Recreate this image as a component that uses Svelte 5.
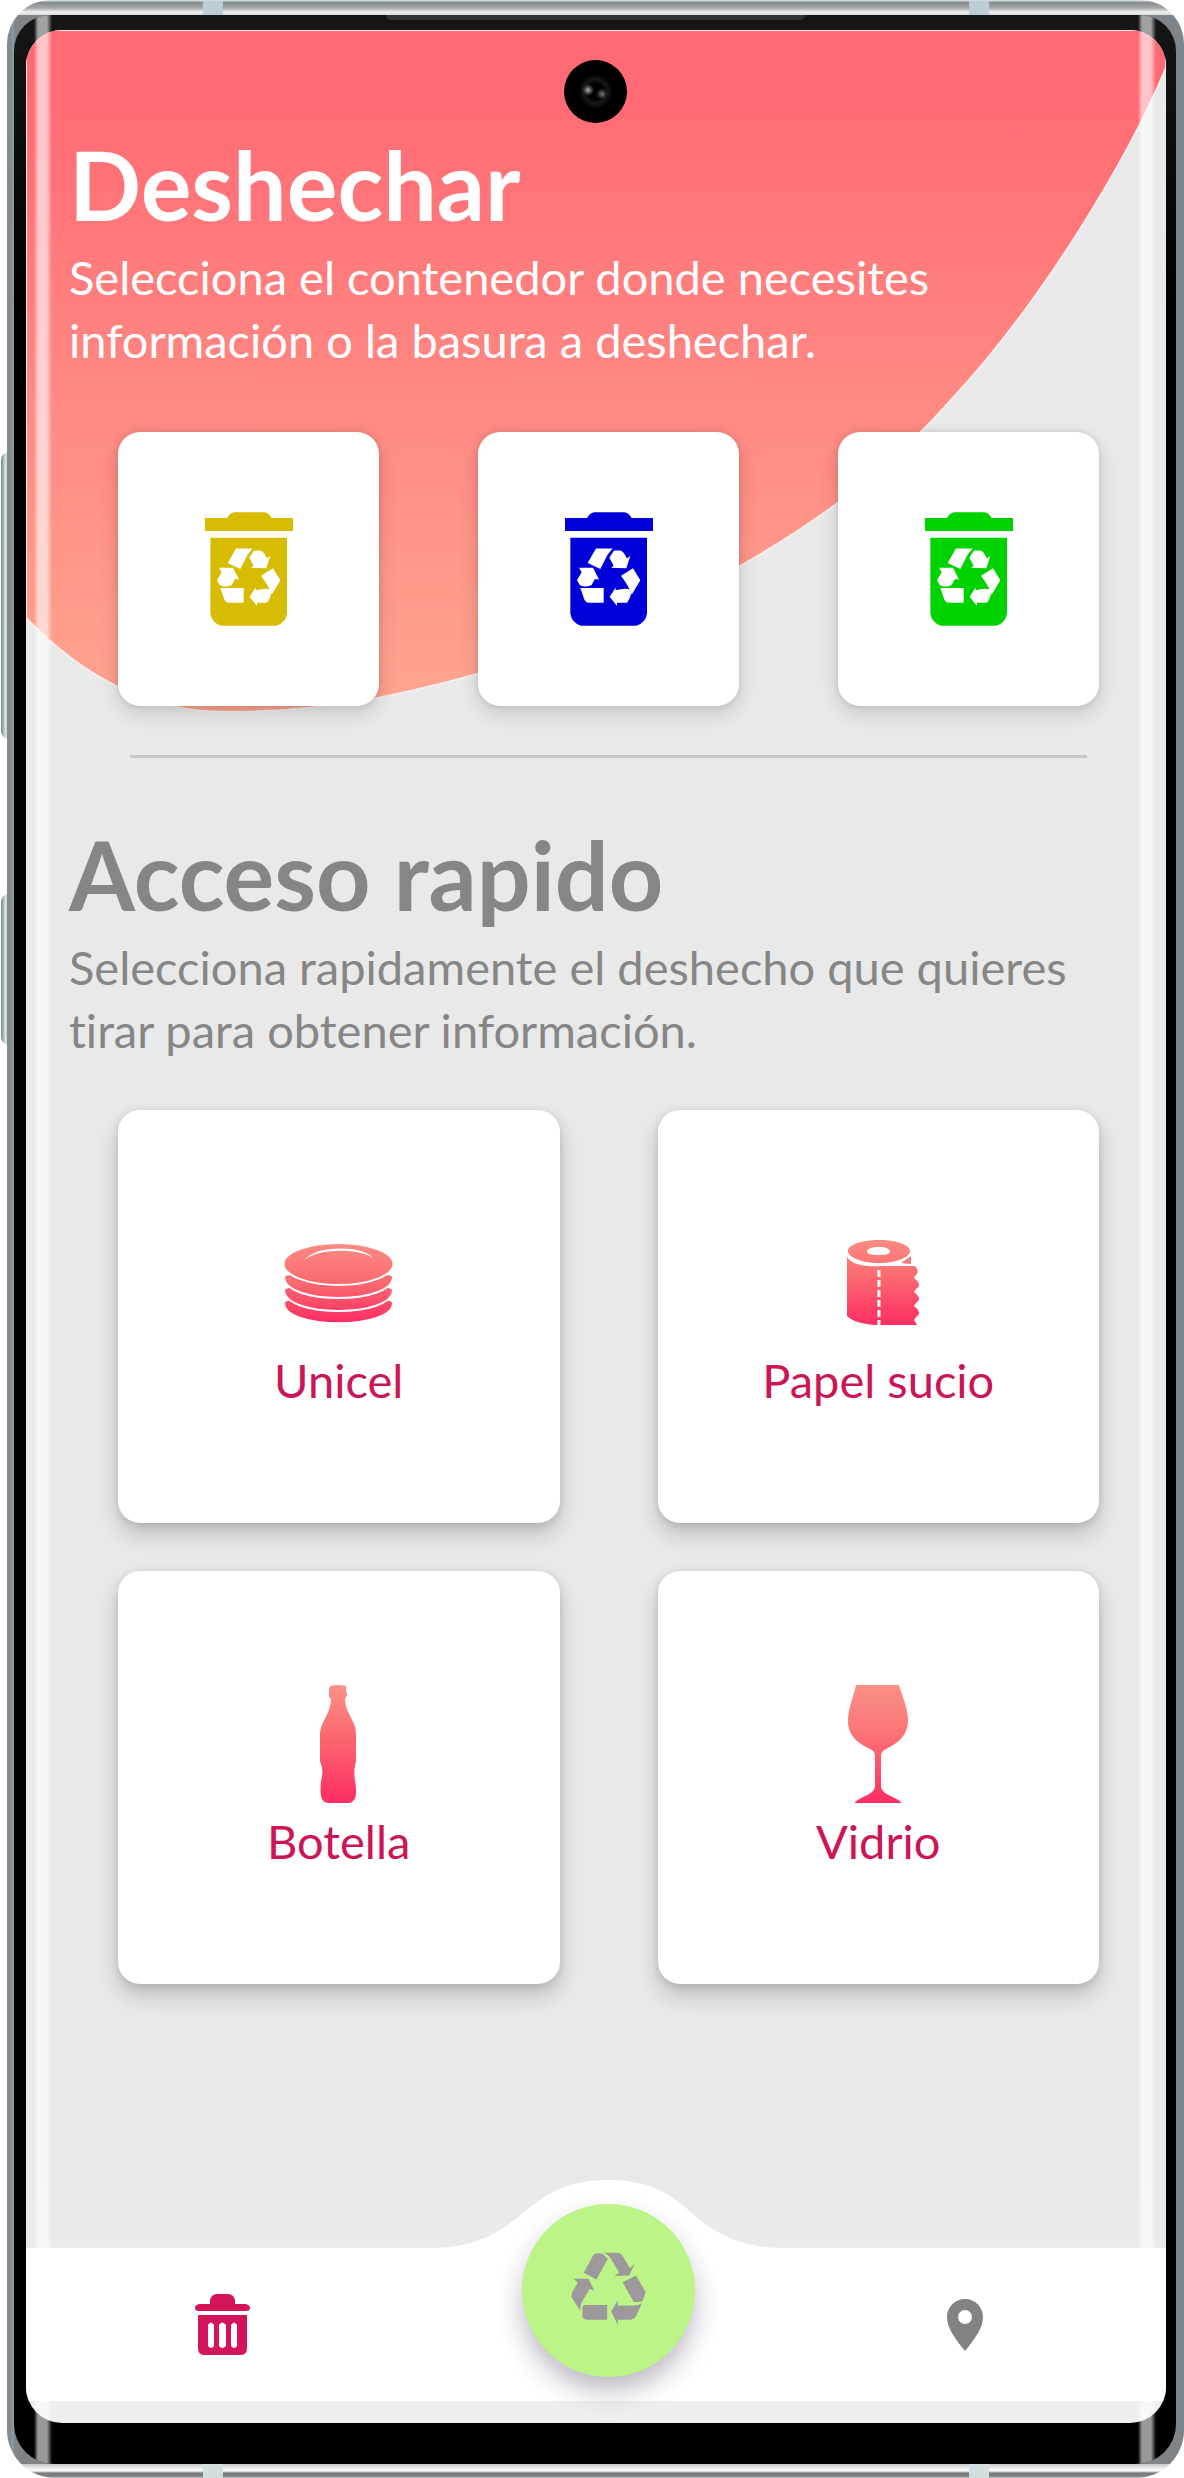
<script>
  const bins = [
    { name: 'Contenedor amarillo', color: 'yellow' },
    { name: 'Contenedor azul', color: 'blue' },
    { name: 'Contenedor verde', color: 'green' }
  ];
  const items = [
    { name: 'Unicel', icon: 'plates' },
    { name: 'Papel sucio', icon: 'paper' },
    { name: 'Botella', icon: 'bottle' },
    { name: 'Vidrio', icon: 'glass' }
  ];
</script>

<div class="device">
  <span class="side volume"></span>
  <span class="side power"></span>
  <div class="frame">
    <span class="band top left"></span>
    <span class="band top right"></span>
    <span class="band bottom left"></span>
    <span class="band bottom right"></span>
    <div class="bezel">
      <span class="earpiece"></span>
      <div class="screen">
        <svg class="wave" viewBox="0 0 1140 683" preserveAspectRatio="none" aria-hidden="true">
          <defs>
            <linearGradient id="coral" x1="0" y1="0" x2="0" y2="1">
              <stop offset="0" stop-color="#ff6a74" />
              <stop offset="0.12" stop-color="#ff6c75" />
              <stop offset="0.55" stop-color="#ff8983" />
              <stop offset="1" stop-color="#ffa590" />
            </linearGradient>
          </defs>
          <path
            d="M0 0H1140V38C1102 130 1016 272 925 370C880 422 810 482 714 536C600 600 480 642 352 668C300 678 250 682 199 682C120 682 55 645 0 588Z"
            fill="url(#coral)"
            stroke="#f4eeee"
            stroke-width="2"
          />
        </svg>

        <main>
          <section class="intro">
            <h1>Deshechar</h1>
            <p>Selecciona el contenedor donde necesites información o la basura a deshechar.</p>
          </section>

          <div class="bins">
            {#each bins as bin}
              <button class="card bin {bin.color}" aria-label={bin.name}>
                <svg viewBox="20 20 264 344" preserveAspectRatio="none" aria-hidden="true">
                  <path fill="currentColor" d="M20 38H86Q96 22 108 21H198Q210 22 220 38H284V77H20Z" />
                  <path fill="currentColor" d="M36 98H266V326Q262 354 234 363H68Q40 354 36 326Z" />
                  <g fill="#fff">
                    <path d="M113 130H163L148 148L126 192L88 174Z" />
                    <path d="M167 136H186Q194 138 198 146L206 160L216 152L204 190L158 188L166 182L153 158Z" />
                    <path d="M188 212L224 190L246 226L220 270Q216 250 188 212Z" />
                    <path d="M154 276L172 248V256Q200 248 216 254Q222 272 206 294H176V304Z" />
                    <path d="M66 249H136V294H90Q81 292 78 284Z" />
                    <path d="M62 188H104L122 224L110 222L100 240Q80 250 64 240L56 226L70 202Z" />
                  </g>
                </svg>
              </button>
            {/each}
          </div>

          <hr />

          <section class="intro quick">
            <h2>Acceso rapido</h2>
            <p>Selecciona rapidamente el deshecho que quieres tirar para obtener información.</p>
          </section>

          <div class="items">
            {#each items as item}
              <button class="card item">
                <span class="art">
                  {#if item.icon === 'plates'}
                    <svg width="109" height="80" viewBox="0 0 109 80" aria-hidden="true">
                      <defs>
                        <linearGradient id="plates" gradientUnits="userSpaceOnUse" x1="0" y1="0" x2="0" y2="80">
                          <stop offset="0" stop-color="#fb8b83" />
                          <stop offset="0.5" stop-color="#fb6a70" />
                          <stop offset="1" stop-color="#fd2c62" />
                        </linearGradient>
                      </defs>
                      <g fill="url(#plates)" stroke="#fff" stroke-width="2">
                        <path d="M0 60C0 50 109 50 109 60C109 87 0 87 0 60Z" />
                        <path d="M0 47C0 38 109 38 109 47C109 75 0 75 0 47Z" />
                        <path d="M0 34C0 26 109 26 109 34C109 62 0 62 0 34Z" />
                        <ellipse cx="54.500" cy="21" rx="55" ry="21" />
                      </g>
                      <path d="M21 17C30 2 80 2 89 15C74 5 34 5 21 17Z" fill="#fff" />
                    </svg>
                  {:else if item.icon === 'paper'}
                    <svg width="81" height="86" viewBox="-9 0 81 86" aria-hidden="true">
                      <defs>
                        <linearGradient id="paper" gradientUnits="userSpaceOnUse" x1="0" y1="0" x2="0" y2="86">
                          <stop offset="0" stop-color="#fb8b83" />
                          <stop offset="0.4" stop-color="#fb6c70" />
                          <stop offset="1" stop-color="#fd2c62" />
                        </linearGradient>
                      </defs>
                      <g fill="url(#paper)">
                        <path d="M0 17C6 26 22 27 34 26H68Q73 31 69 35L67 38Q76 45 69 49L67 52Q76 59 69 63L67 66Q76 73 69 77L67 80L70 85H30Q8 84 0 76Z" />
                        <path d="M64 16V24L54 23Z" />
                        <path fill-rule="evenodd" d="M32 0C50 0 63 5 63 11S50 23 32 23S1 17 1 11S14 0 32 0ZM32 7C25 7 20 9 20 11.500S25 15 32 15S43 14 43 11.500S39 7 32 7Z" />
                      </g>
                      <path d="M32 30V86" stroke="#fff" stroke-width="3" stroke-dasharray="7 3" />
                    </svg>
                  {:else if item.icon === 'bottle'}
                    <svg width="37" height="118" viewBox="0 0 37 118" aria-hidden="true">
                      <defs>
                        <linearGradient id="bottle" x1="0" y1="0" x2="0" y2="1">
                          <stop offset="0" stop-color="#fb9187" />
                          <stop offset="0.4" stop-color="#fb6c70" />
                          <stop offset="1" stop-color="#fd2c62" />
                        </linearGradient>
                      </defs>
                      <path fill="url(#bottle)" d="M10 1Q18 -1 26 1V6Q28 8 26 12L25 14C25 28 36 36 36 48V76C34 84 34 89 35 96C37 108 37 117 28 118H8C0 117 0 108 1 96C3 89 3 84 0 76V48C1 36 11 28 11 14L9 12V5Z" />
                    </svg>
                  {:else}
                    <svg width="60" height="118" viewBox="0 0 60 118" aria-hidden="true">
                      <defs>
                        <linearGradient id="glass" x1="0" y1="0" x2="0" y2="1">
                          <stop offset="0" stop-color="#fb9187" />
                          <stop offset="0.4" stop-color="#fb7476" />
                          <stop offset="1" stop-color="#fd2c62" />
                        </linearGradient>
                      </defs>
                      <path fill="url(#glass)" d="M8 0H51C55 13 60 24 60 35C60 52 48 59 38 64Q33 66 33 71V102C35 110 46 111 53 117V118H7V117C14 111 25 110 27 102V71Q27 66 22 64C12 59 0 52 0 36C0 24 5 13 8 0Z" />
                    </svg>
                  {/if}
                </span>
                {item.name}
              </button>
            {/each}
          </div>
        </main>

        <nav aria-label="Principal">
          <svg class="hump" viewBox="0 0 380 69" aria-hidden="true">
            <path fill="#fff" d="M14 69C60 68 78 54 100 38C122 20 142 1 190 1C238 1 258 20 280 40C302 56 320 68 366 69Z" />
          </svg>
          <a class="tab trash" href="#deshechar" aria-label="Deshechar">
            <svg width="55" height="62" viewBox="0 0 55 62" aria-hidden="true">
              <path fill="currentColor" d="M4 10H15V6Q16 1 21 0H34Q39 1 40 6V10H51Q55 11 55 14T51 17H4Q0 17 0 14T4 10Z" />
              <path fill="currentColor" fill-rule="evenodd" d="M3 21H52V54Q52 61 46 61H9Q3 61 3 54ZM13 31V52Q16 56 19 52V31Q16 26 13 31ZM24 31V52Q27 56 31 52V31Q27 26 24 31ZM36 31V52Q39 56 42 52V31Q39 26 36 31Z" />
            </svg>
          </a>
          <button class="fab" aria-label="Reciclar">
            <svg width="75" height="73" viewBox="38 40 224 218" aria-hidden="true">
              <g fill="currentColor">
                <path d="M106 47Q118 42 132 45L148 60L114 122L76 102Z" />
                <path d="M134 42H180Q188 44 192 52L214 88L228 76L212 110L168 112L182 102L158 62Q150 46 134 42Z" />
                <path d="M192 130L232 110L260 158Q260 170 250 188L226 190Z" />
                <path d="M158 218L178 184V200H226Q240 200 250 192L232 232Q226 242 214 242H178V258Z" />
                <path d="M78 198H146V242H86Q76 242 72 234V206Q74 199 78 198Z" />
                <path d="M46 120H90L108 156L94 150L70 190Q64 204 66 216L40 176Q38 164 44 156L58 132Z" />
              </g>
            </svg>
          </button>
          <a class="tab pin" href="#mapa" aria-label="Mapa">
            <svg width="36" height="52" viewBox="0 0 36 52" aria-hidden="true">
              <path fill="currentColor" fill-rule="evenodd" d="M18 0C28 0 36 8 36 18C36 30 26 42 18 52C10 42 0 30 0 18C0 8 8 0 18 0ZM18 11A7 7 0 1 0 18 25A7 7 0 1 0 18 11Z" />
            </svg>
          </a>
        </nav>
      </div>
      <span class="camera"></span>
      <span class="glare start"></span>
      <span class="glare end"></span>
    </div>
  </div>
</div>

<style>
  :global(body) {
    background: #fff;
    font-family: Lato, 'Noto Sans', sans-serif;
    font-variant-ligatures: none;
  }

  * {
    box-sizing: border-box;
  }

  .device {
    position: relative;
    display: flex;
    min-height: 100vh;
    padding-left: 7px;
  }

  .side {
    position: absolute;
    left: 1px;
    width: 16px;
    border-radius: 8px 0 0 8px;
    background: linear-gradient(90deg, #76868a, #dfe7e8 30%, #8b999c 50%, #a9b5b8);
  }

  .volume {
    top: 452px;
    height: 287px;
  }

  .power {
    top: 894px;
    height: 151px;
  }

  .frame {
    position: relative;
    flex: 1;
    display: flex;
    padding: 15px 8px 14px 7px;
    border-radius: 44px 44px 48px 48px;
    background:
      linear-gradient(180deg, #cddcdc 0 1px, #84898c 2px, #a4a8aa 8px, #f0f0f0 12px, #d8dcdc 15px) top / 100% 15px no-repeat,
      linear-gradient(180deg, #c8c8c8, #f2f2f2 5px, #fafafa 7px, #787d80 9px, #787d80 12px, #c0c4c4 14px) bottom / 100% 14px no-repeat,
      linear-gradient(90deg, #7f8b8e 0 3px, #929ca0 7px, transparent 7px) left / 100% 100% no-repeat,
      #7e8488;
  }

  .band {
    position: absolute;
    width: 20px;
    height: 15px;
    background: #bccdd4;
  }

  .band.top {
    top: 1px;
  }

  .band.bottom {
    bottom: 0;
    height: 14px;
    background: #d2dddf;
  }

  .band.left {
    left: 196px;
  }

  .band.right {
    right: 195px;
  }

  .bezel {
    position: relative;
    flex: 1;
    display: flex;
    padding: 15px 10px 41px 12px;
    border-radius: 36px 36px 40px 40px;
    overflow: hidden;
    background: linear-gradient(180deg, #161616, #000 300px);
  }

  .earpiece {
    position: absolute;
    top: 0;
    left: 372px;
    right: 371px;
    height: 5px;
    border-radius: 0 0 12px 12px;
    background: #303434;
  }

  .camera {
    position: absolute;
    top: 45px;
    left: 50%;
    width: 63px;
    height: 63px;
    margin-left: -31px;
    border-radius: 50%;
    background:
      radial-gradient(circle at 24px 30px, #b0b0b0 0, #333 4px, transparent 6px),
      radial-gradient(circle at 38px 34px, #777 0, #222 4px, transparent 6px),
      radial-gradient(circle, #000 8px, #191919 12px, #000 17px);
  }

  .glare {
    position: absolute;
    top: 0;
    bottom: 0;
    width: 18px;
    background: linear-gradient(90deg, transparent, rgba(255, 255, 255, 0.6) 4px, rgba(255, 255, 255, 0.6) 13px, transparent);
  }

  .glare.start {
    left: 20px;
  }

  .glare.end {
    right: 20px;
  }

  .screen {
    position: relative;
    flex: 1;
    display: flex;
    flex-direction: column;
    justify-content: space-between;
    padding-bottom: 22px;
    border-radius: 36px;
    overflow: hidden;
    background: linear-gradient(180deg, #e9e9e9 0 90%, #efefef 99%);
  }

  .wave {
    position: absolute;
    top: 0;
    left: 0;
    width: 100%;
    height: 683px;
  }

  main {
    position: relative;
    display: flex;
    flex-direction: column;
    padding: 104px 67px 0 92px;
  }

  .intro {
    margin-left: -49px;
    color: #fff;
  }

  .quick {
    color: #868686;
  }

  h1,
  h2 {
    margin: 0;
    font-size: 95px;
    line-height: 100px;
    font-weight: 700;
  }

  p {
    margin: 12px 0 0;
    font-size: 47px;
    line-height: 63px;
  }

  .card {
    display: flex;
    align-items: center;
    justify-content: center;
    padding: 0;
    border: 0;
    border-radius: 22px;
    background: #fff;
    box-shadow:
      0 8px 20px rgba(0, 0, 0, 0.14),
      0 0 6px rgba(0, 0, 0, 0.12);
    font: inherit;
    cursor: pointer;
  }

  .bins {
    display: grid;
    grid-template-columns: repeat(3, 1fr);
    gap: 99px;
    margin-top: 60px;
  }

  .bin {
    height: 274px;
  }

  .bin svg {
    width: 88px;
    height: 114px;
  }

  .yellow {
    color: #d8bc02;
  }

  .blue {
    color: #0000d8;
  }

  .green {
    color: #00d200;
  }

  hr {
    width: calc(100% - 24px);
    height: 3px;
    margin: 49px auto 0;
    border: 0;
    background: #c6c8c8;
  }

  .quick {
    margin-top: 66px;
  }

  .items {
    display: grid;
    grid-template-columns: repeat(2, 1fr);
    gap: 48px 98px;
    margin-top: 48px;
  }

  .item {
    flex-direction: column;
    height: 413px;
    color: #cb1556;
    font-size: 47px;
    line-height: 60px;
    box-shadow:
      0 12px 22px rgba(0, 0, 0, 0.18),
      0 2px 8px rgba(0, 0, 0, 0.12);
  }

  .art {
    display: flex;
    align-items: center;
    height: 118px;
    margin-bottom: 8px;
  }

  nav {
    position: relative;
    display: grid;
    grid-template-columns: 392fr 380fr 334fr;
    align-items: center;
    justify-items: center;
    height: 153px;
    padding-right: 34px;
    background: #fff;
  }

  .hump {
    position: absolute;
    bottom: 100%;
    left: 34.4%;
    width: 33.4%;
  }

  .tab {
    display: flex;
    color: #d4145a;
  }

  .pin {
    color: #828282;
  }

  .fab {
    position: relative;
    display: flex;
    align-items: center;
    justify-content: center;
    width: 173px;
    height: 173px;
    margin-top: -68px;
    padding: 0 0 4px;
    border: 0;
    border-radius: 50%;
    background: #bcf488;
    color: #9c989c;
    box-shadow: 0 14px 26px rgba(40, 30, 60, 0.3);
    cursor: pointer;
  }
</style>
